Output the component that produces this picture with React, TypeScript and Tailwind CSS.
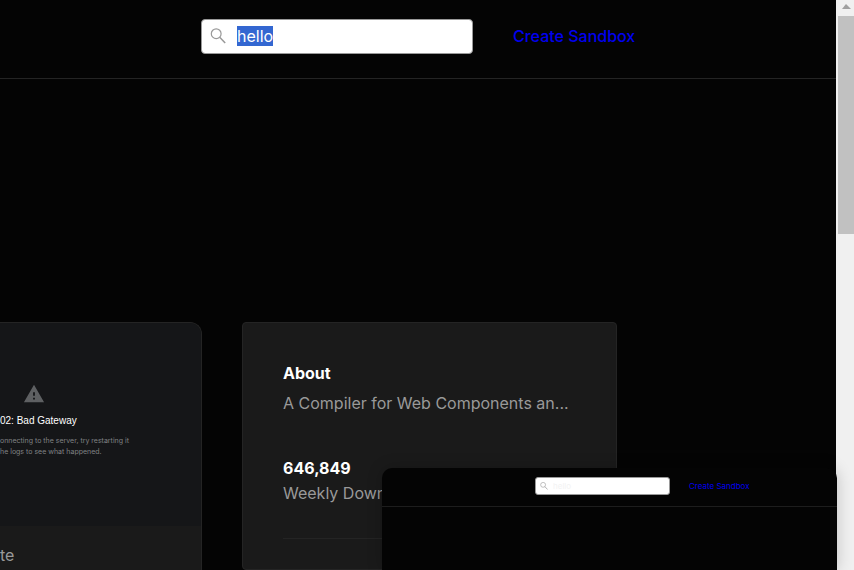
import { useEffect, useRef } from "react";

function SearchIcon({ className }: { className: string }) {
  return (
    <svg viewBox="0 0 16 16" fill="none" stroke="#999" strokeWidth="1.2" className={className} aria-hidden="true">
      <circle cx="6.200" cy="5.700" r="4.900" />
      <path d="M9.700 9.200 15.200 15" strokeWidth="1.500" />
    </svg>
  );
}

function Header() {
  const input = useRef<HTMLInputElement>(null);
  useEffect(() => {
    input.current?.focus();
    input.current?.select();
  }, []);
  return (
    <header className="flex h-[79px] items-start border-b border-[#242424] pl-[201px] pt-[19px]">
      <label className="flex h-[35px] w-[272px] items-center rounded-[4px] border border-[#999] bg-white pb-px pl-2">
        <SearchIcon className="size-4 shrink-0" />
        <input
          ref={input}
          type="text"
          aria-label="Search"
          defaultValue="hello"
          className="ml-[11px] w-full min-w-0 bg-transparent text-[16px] leading-5 text-black outline-none selection:bg-[#3367d1] selection:text-white"
        />
      </label>
      <a href="#create" className="ml-10 text-[16px] font-medium leading-[34px] text-[#0000ee]">
        Create Sandbox
      </a>
    </header>
  );
}

function PreviewCard() {
  return (
    <article className="w-[202px] shrink-0 overflow-hidden rounded-tr-[12px] border-r border-t border-[#242424] bg-[#1a1a1a]">
      <div className="h-[203px] whitespace-nowrap bg-[#151618] pt-[60px]">
        <svg viewBox="0 0 24 24" fill="#5e6062" className="ml-[23px] size-[22px]" aria-hidden="true">
          <path d="M1 21h22L12 2 1 21zm12-3h-2v-2h2v2zm0-4h-2v-4h2v4z" />
        </svg>
        <h2 className="mt-2 font-['Liberation_Sans',sans-serif] text-[10px] leading-4 text-white">
          02: Bad Gateway
        </h2>
        <p className="mt-[6px] text-[7px] leading-[11px] text-[#808284]">
          onnecting to the server, try restarting it
          <br />
          he logs to see what happened.
        </p>
      </div>
      <p className="pt-[17px] text-[16px] leading-6 text-[#999]">te</p>
    </article>
  );
}

function AboutCard() {
  return (
    <article className="w-[375px] shrink-0 whitespace-nowrap rounded-[4px] border border-[#242424] bg-[#1a1a1a] px-10 pt-[38px] text-[16px] leading-6">
      <h2 className="font-bold text-white">About</h2>
      <p className="mt-[6px] text-[#999]">A Compiler for Web Components an...</p>
      <p className="mt-[41px] font-bold text-white">646,849</p>
      <p className="mt-px text-[#999]">Weekly Downloads</p>
      <hr className="mt-[33px] border-[#242424]" />
    </article>
  );
}

function MiniWindow() {
  return (
    <aside className="absolute bottom-0 left-[382px] right-[17px] h-[102px] rounded-t-[10px] bg-[#040404] shadow-[0_0_16px_rgba(0,0,0,0.2)]">
      <div className="flex h-[39px] items-start border-b border-[#1d1d1d] pl-[153px] pt-[9px]">
        <label className="flex h-[18px] w-[135px] items-center rounded-[3px] border border-[#999] bg-white pl-1">
          <SearchIcon className="size-2 shrink-0" />
          <input
            type="text"
            aria-label="Search preview"
            defaultValue="hello"
            className="ml-[5px] w-full min-w-0 bg-transparent text-[8px] text-[#f3f3f3] outline-none"
          />
        </label>
        <a href="#create-preview" className="ml-[19px] text-[8px] leading-[18px] text-[#0000ee]">
          Create Sandbox
        </a>
      </div>
    </aside>
  );
}

function ScrollTrack() {
  return (
    <div className="w-[18px] shrink-0 bg-[#f0f0f0] pl-[2px]" aria-hidden="true">
      <svg viewBox="0 0 16 16" className="block size-4">
        <path d="M8 4 13 9H4z" fill="#a0a0a0" />
      </svg>
      <div className="h-[218px] bg-[#c1c1c1]" />
    </div>
  );
}

export default function App() {
  return (
    <div className="relative flex h-screen overflow-hidden bg-[#040404] font-[Inter,sans-serif]">
      <main className="flex min-w-0 flex-1 flex-col overflow-hidden">
        <Header />
        <section className="mt-[243px] flex flex-1 gap-10">
          <PreviewCard />
          <AboutCard />
        </section>
      </main>
      <ScrollTrack />
      <MiniWindow />
    </div>
  );
}
